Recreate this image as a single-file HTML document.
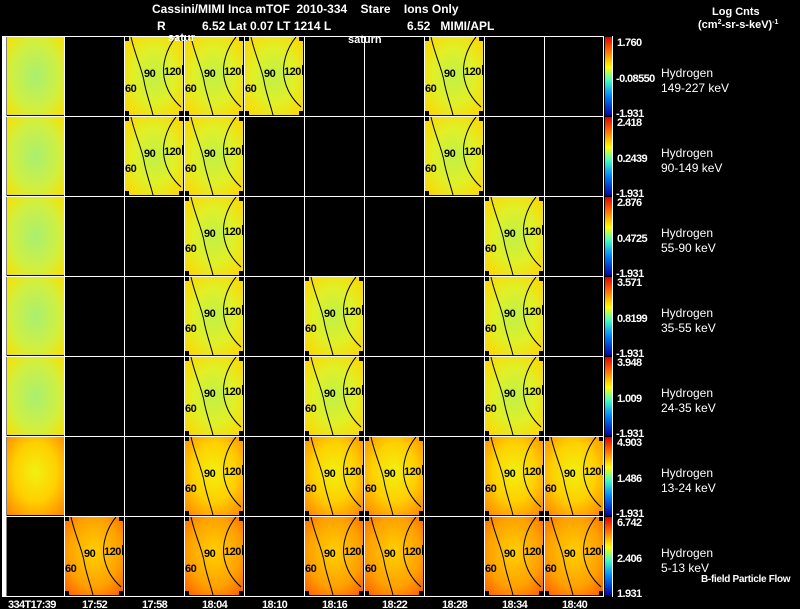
<!DOCTYPE html>
<html><head><meta charset="utf-8"><style>
html,body{margin:0;padding:0;background:#000;width:800px;height:609px;overflow:hidden}
svg{display:block}
text{font-family:"Liberation Sans",Arial,sans-serif;fill:#fff;white-space:pre}
.t{font-size:12px;font-weight:bold}
.v{font-size:11px;font-weight:bold;letter-spacing:-0.6px}
.c text{fill:#000;font-size:11px;font-weight:bold;letter-spacing:-0.5px}
.h{font-size:12px}
</style></head><body>
<svg width="800" height="609" viewBox="0 0 800 609" xmlns="http://www.w3.org/2000/svg" xml:space="preserve">
<defs>
<radialGradient id="gy" cx="0.5" cy="0.5" r="0.7">
<stop offset="0" stop-color="#c0f048"/><stop offset="0.5" stop-color="#e0f028"/><stop offset="1" stop-color="#ffd400"/></radialGradient>
<radialGradient id="g0" cx="0.5" cy="0.5" r="0.7">
<stop offset="0" stop-color="#a8f070"/><stop offset="0.6" stop-color="#d0f040"/><stop offset="1" stop-color="#f8e000"/></radialGradient>
<radialGradient id="go" cx="0.5" cy="0.45" r="0.75">
<stop offset="0" stop-color="#f0f010"/><stop offset="0.5" stop-color="#ffd000"/><stop offset="1" stop-color="#ff8000"/></radialGradient>
<radialGradient id="gr" cx="0.5" cy="0.45" r="0.75">
<stop offset="0" stop-color="#ffd000"/><stop offset="0.6" stop-color="#ffa000"/><stop offset="1" stop-color="#ff5800"/></radialGradient>
<linearGradient id="jet" x1="0" y1="0" x2="0" y2="1">
<stop offset="0" stop-color="#e00000"/><stop offset="0.2" stop-color="#ff8000"/><stop offset="0.38" stop-color="#ffff00"/><stop offset="0.55" stop-color="#40ffc0"/><stop offset="0.75" stop-color="#0080ff"/><stop offset="1" stop-color="#0000a0"/></linearGradient>
<g id="notch"><rect x="0" y="0" width="4" height="4" fill="#000"/><rect x="54" y="0" width="4" height="4" fill="#000"/><rect x="0" y="74" width="4" height="4" fill="#000"/><rect x="54" y="74" width="4" height="4" fill="#000"/></g>
<g id="cont"><path d="M6,0 C10,18 17,32 19,44 S25,66 28,78" fill="none" stroke="#000" stroke-width="1"/><path d="M51,0 C41,12 37,28 39,40 S47,62 56,70" fill="none" stroke="#000" stroke-width="1"/><rect x="57" y="28" width="1" height="10" fill="#000"/></g>
<g id="py"><rect width="58" height="78" fill="url(#gy)"/><use href="#notch"/><use href="#cont"/></g>
<g id="po"><rect width="58" height="78" fill="url(#go)"/><use href="#notch"/><use href="#cont"/></g>
<g id="pr"><rect width="58" height="78" fill="url(#gr)"/><use href="#notch"/><use href="#cont"/></g>
</defs>

<g>
<rect x="7" y="37" width="57" height="78" fill="url(#g0)"/>
<rect x="7" y="117" width="57" height="78" fill="url(#g0)"/>
<rect x="7" y="197" width="57" height="78" fill="url(#g0)"/>
<rect x="7" y="277" width="57" height="78" fill="url(#g0)"/>
<rect x="7" y="357" width="57" height="78" fill="url(#g0)"/>
<rect x="7" y="437" width="57" height="78" fill="url(#go)"/>
</g>

<g class="c">
<g transform="translate(125,37)"><use href="#py"/><text x="19" y="40">90</text><text x="39" y="38">120</text><text x="0" y="55">60</text></g>
<g transform="translate(185,37)"><use href="#py"/><text x="19" y="40">90</text><text x="39" y="38">120</text><text x="0" y="55">60</text></g>
<g transform="translate(245,37)"><use href="#py"/><text x="19" y="40">90</text><text x="39" y="38">120</text><text x="0" y="55">60</text></g>
<g transform="translate(425,37)"><use href="#py"/><text x="19" y="40">90</text><text x="39" y="38">120</text><text x="0" y="55">60</text></g>

<g transform="translate(125,117)"><use href="#py"/><text x="19" y="40">90</text><text x="39" y="38">120</text><text x="0" y="55">60</text></g>
<g transform="translate(185,117)"><use href="#py"/><text x="19" y="40">90</text><text x="39" y="38">120</text><text x="0" y="55">60</text></g>
<g transform="translate(425,117)"><use href="#py"/><text x="19" y="40">90</text><text x="39" y="38">120</text><text x="0" y="55">60</text></g>

<g transform="translate(185,197)"><use href="#py"/><text x="19" y="40">90</text><text x="39" y="38">120</text><text x="0" y="55">60</text></g>
<g transform="translate(485,197)"><use href="#py"/><text x="19" y="40">90</text><text x="39" y="38">120</text><text x="0" y="55">60</text></g>

<g transform="translate(185,277)"><use href="#py"/><text x="19" y="40">90</text><text x="39" y="38">120</text><text x="0" y="55">60</text></g>
<g transform="translate(305,277)"><use href="#py"/><text x="19" y="40">90</text><text x="39" y="38">120</text><text x="0" y="55">60</text></g>
<g transform="translate(485,277)"><use href="#py"/><text x="19" y="40">90</text><text x="39" y="38">120</text><text x="0" y="55">60</text></g>

<g transform="translate(185,357)"><use href="#py"/><text x="19" y="40">90</text><text x="39" y="38">120</text><text x="0" y="55">60</text></g>
<g transform="translate(305,357)"><use href="#py"/><text x="19" y="40">90</text><text x="39" y="38">120</text><text x="0" y="55">60</text></g>
<g transform="translate(485,357)"><use href="#py"/><text x="19" y="40">90</text><text x="39" y="38">120</text><text x="0" y="55">60</text></g>

<g transform="translate(185,437)"><use href="#po"/><text x="19" y="40">90</text><text x="39" y="38">120</text><text x="0" y="55">60</text></g>
<g transform="translate(305,437)"><use href="#po"/><text x="19" y="40">90</text><text x="39" y="38">120</text><text x="0" y="55">60</text></g>
<g transform="translate(365,437)"><use href="#po"/><text x="19" y="40">90</text><text x="39" y="38">120</text><text x="0" y="55">60</text></g>
<g transform="translate(485,437)"><use href="#po"/><text x="19" y="40">90</text><text x="39" y="38">120</text><text x="0" y="55">60</text></g>
<g transform="translate(545,437)"><use href="#po"/><text x="19" y="40">90</text><text x="39" y="38">120</text><text x="0" y="55">60</text></g>

<g transform="translate(65,517)"><use href="#pr"/><text x="19" y="40">90</text><text x="39" y="38">120</text><text x="0" y="55">60</text></g>
<g transform="translate(185,517)"><use href="#pr"/><text x="19" y="40">90</text><text x="39" y="38">120</text><text x="0" y="55">60</text></g>
<g transform="translate(305,517)"><use href="#pr"/><text x="19" y="40">90</text><text x="39" y="38">120</text><text x="0" y="55">60</text></g>
<g transform="translate(365,517)"><use href="#pr"/><text x="19" y="40">90</text><text x="39" y="38">120</text><text x="0" y="55">60</text></g>
<g transform="translate(485,517)"><use href="#pr"/><text x="19" y="40">90</text><text x="39" y="38">120</text><text x="0" y="55">60</text></g>
<g transform="translate(545,517)"><use href="#pr"/><text x="19" y="40">90</text><text x="39" y="38">120</text><text x="0" y="55">60</text></g>
</g>

<g stroke="#fff" stroke-width="1" fill="none">
<rect x="2" y="36" width="4.5" height="561" fill="#fff" stroke="none"/>
<path d="M4,36.5H604M4,116.5H604M4,196.5H604M4,276.5H604M4,356.5H604M4,436.5H604M4,516.5H604M4,596.5H604"/>
<path d="M64.5,36V597M124.5,36V597M184.5,36V597M244.5,36V597M304.5,36V597M364.5,36V597M424.5,36V597M484.5,36V597M544.5,36V597M603.5,36V597"/>
</g>

<g>
<rect x="605" y="37" width="7" height="79" fill="url(#jet)"/>
<rect x="605" y="117" width="7" height="79" fill="url(#jet)"/>
<rect x="605" y="197" width="7" height="79" fill="url(#jet)"/>
<rect x="605" y="277" width="7" height="79" fill="url(#jet)"/>
<rect x="605" y="357" width="7" height="79" fill="url(#jet)"/>
<rect x="605" y="437" width="7" height="79" fill="url(#jet)"/>
<rect x="605" y="517" width="7" height="79" fill="url(#jet)"/>
<path d="M612.5,36V597" stroke="#fff"/>
</g>

<g class="v">
<text x="617" y="46">1.760</text><text x="616" y="82">-0.08550</text><text x="616" y="117">-1.931</text>
<text x="617" y="126">2.418</text><text x="617" y="162">0.2439</text><text x="616" y="197">-1.931</text>
<text x="617" y="206">2.876</text><text x="617" y="242">0.4725</text><text x="616" y="277">-1.931</text>
<text x="617" y="286">3.571</text><text x="617" y="322">0.8199</text><text x="616" y="357">-1.931</text>
<text x="617" y="366">3.948</text><text x="617" y="402">1.009</text><text x="616" y="437">-1.931</text>
<text x="617" y="446">4.903</text><text x="617" y="482">1.486</text><text x="616" y="517">-1.931</text>
<text x="617" y="526">6.742</text><text x="617" y="562">2.406</text><text x="617" y="597">1.931</text>
</g>

<g class="h">
<text x="661" y="77">Hydrogen</text><text x="661" y="92">149-227 keV</text>
<text x="661" y="157">Hydrogen</text><text x="661" y="172">90-149 keV</text>
<text x="661" y="237">Hydrogen</text><text x="661" y="252">55-90 keV</text>
<text x="661" y="317">Hydrogen</text><text x="661" y="332">35-55 keV</text>
<text x="661" y="397">Hydrogen</text><text x="661" y="412">24-35 keV</text>
<text x="661" y="477">Hydrogen</text><text x="661" y="492">13-24 keV</text>
<text x="661" y="557">Hydrogen</text><text x="661" y="572">5-13 keV</text>
<text x="701" y="582" style="font-size:10px;font-weight:bold;letter-spacing:-0.3px">B-field Particle Flow</text>
<text x="712" y="15" style="font-size:11px;font-weight:bold">Log Cnts</text>
<text x="698" y="28" style="font-size:11px;font-weight:bold">(cm<tspan dy="-4" style="font-size:7px">2</tspan><tspan dy="4">-sr-s-keV)</tspan><tspan dy="-4" style="font-size:7px">-1</tspan></text>
</g>

<g class="t">
<text x="152" y="13">Cassini/MIMI Inca mTOF  2010-334    Stare    Ions Only</text>
<text x="157" y="30">R</text>
<text x="202" y="30">6.52 Lat 0.07 LT 1214 L</text>
<text x="407" y="30">6.52   MIMI/APL</text>
<text x="168" y="41" style="font-size:11px">satur</text>
<text x="348" y="43" style="font-size:11px">saturn</text>
</g>

<g class="v" style="font-size:11px">
<text x="8" y="608">334T17:39</text>
<text x="82" y="608">17:52</text>
<text x="142" y="608">17:58</text>
<text x="202" y="608">18:04</text>
<text x="262" y="608">18:10</text>
<text x="322" y="608">18:16</text>
<text x="382" y="608">18:22</text>
<text x="442" y="608">18:28</text>
<text x="502" y="608">18:34</text>
<text x="562" y="608">18:40</text>
</g>
</svg>
</body></html>
